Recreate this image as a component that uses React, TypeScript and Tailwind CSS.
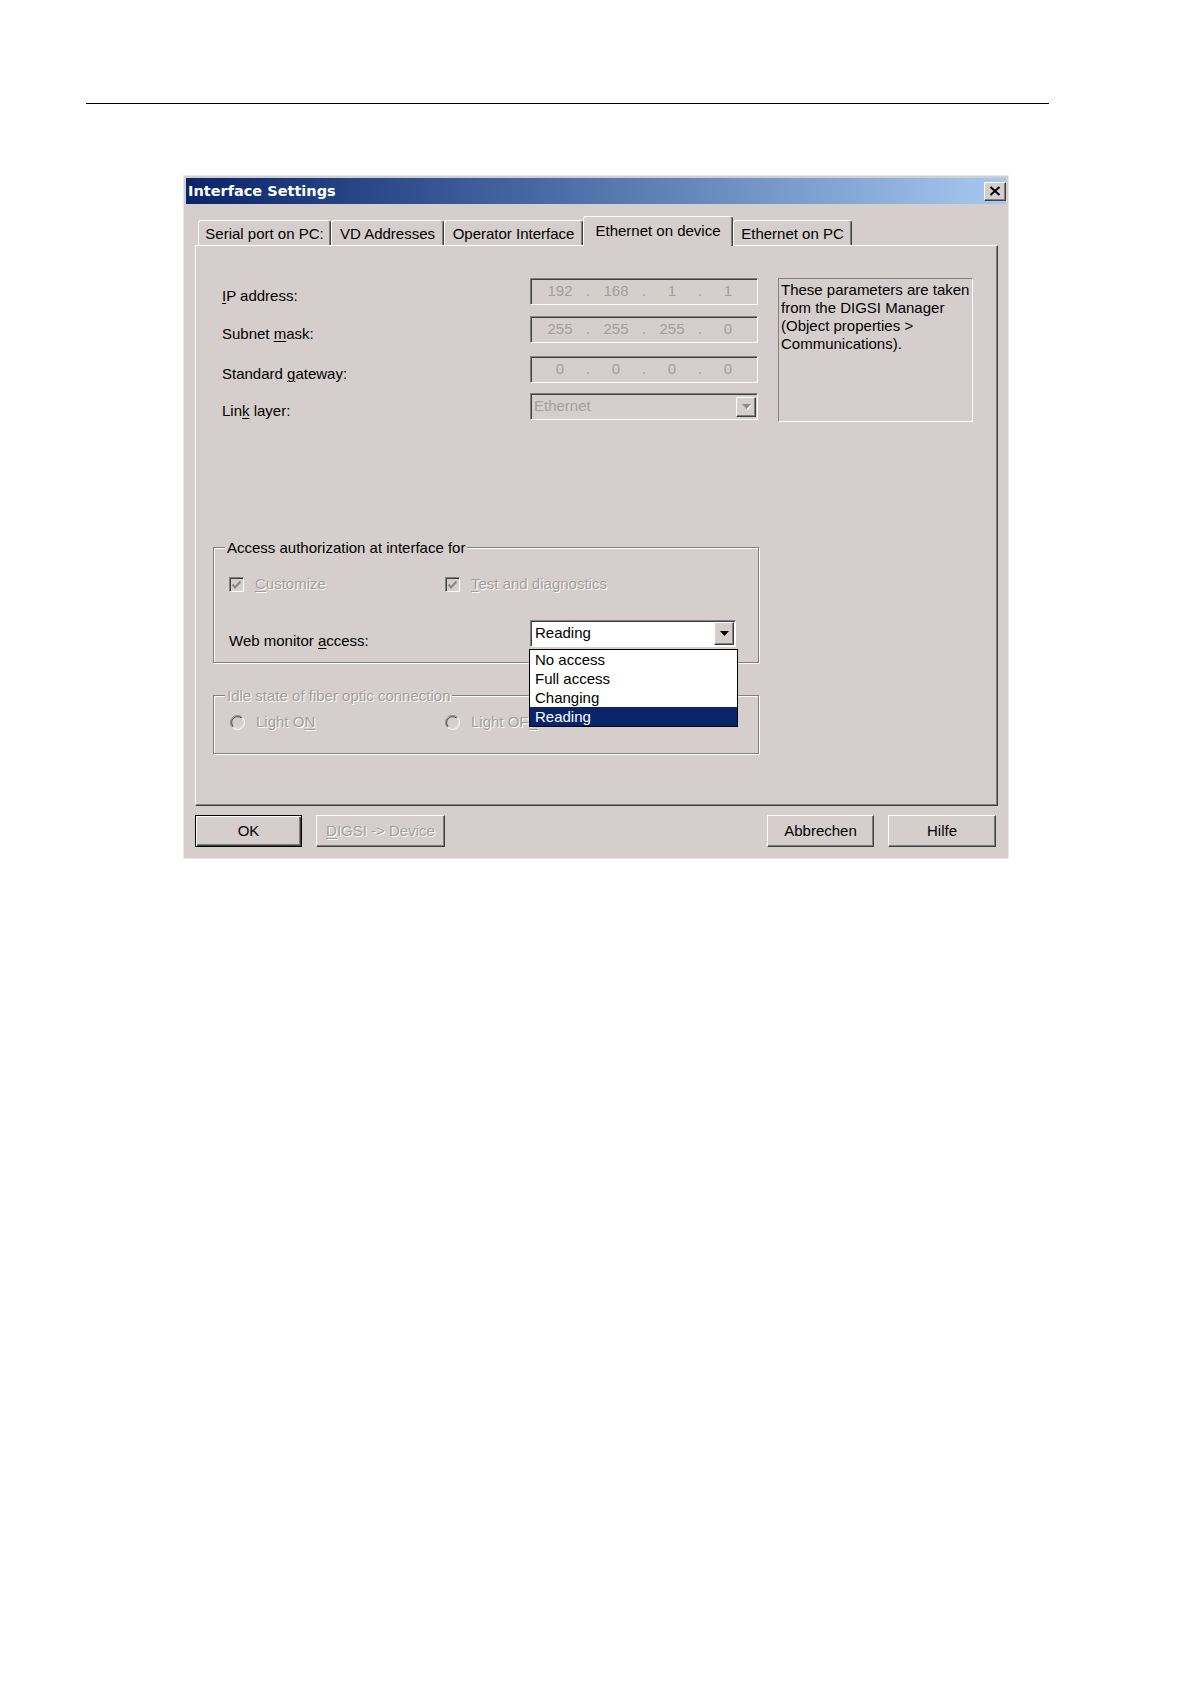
import React from 'react';

// Win2000-style bevels
const raised =
  'border border-t-white border-l-white border-r-[#404040] border-b-[#404040] shadow-[inset_-1px_-1px_0_#808080]';
const sunken =
  'border border-t-[#808080] border-l-[#808080] border-r-white border-b-white shadow-[inset_1px_1px_0_#404040]';
const grayText = 'text-[#a39e9c] [text-shadow:1px_1px_0_#ffffff]';

function Key({ children }: { children: React.ReactNode }) {
  return <span className="underline underline-offset-[2px] decoration-1">{children}</span>;
}

function Arrow({ disabled }: { disabled?: boolean }) {
  return (
    <svg width="9" height="5" viewBox="0 0 9 5" className={disabled ? 'drop-shadow-[1px_1px_0_#ffffff]' : ''}>
      <polygon points="0,0 9,0 4.5,5" fill={disabled ? '#8e8a88' : '#000000'} />
    </svg>
  );
}

function Check() {
  return (
    <div className={`w-[15px] h-[15px] flex items-center justify-center bg-[#d6cecd] ${sunken}`}>
      <svg width="11" height="10" viewBox="0 0 11 10">
        <polyline points="1.5,4.5 4,7.5 9.5,1.5" fill="none" stroke="#8a8584" strokeWidth="2" />
      </svg>
    </div>
  );
}

function Radio() {
  return (
    <svg width="15" height="15" viewBox="0 0 15 15">
      <circle cx="7.5" cy="7.5" r="6.5" fill="#d6cecd" />
      <path d="M2.55 12.45 A7 7 0 0 1 12.45 2.55" fill="none" stroke="#808080" strokeWidth="1" />
      <path d="M12.45 2.55 A7 7 0 0 1 2.55 12.45" fill="none" stroke="#ffffff" strokeWidth="1" />
      <path d="M3.26 11.74 A6 6 0 0 1 11.74 3.26" fill="none" stroke="#404040" strokeWidth="1" />
      <path d="M11.74 3.26 A6 6 0 0 1 3.26 11.74" fill="none" stroke="#e6e0de" strokeWidth="1" />
    </svg>
  );
}

function IpField({ parts }: { parts: string[] }) {
  return (
    <div className={`w-[228px] h-[27px] flex items-center pl-[1px] bg-[#d6cecd] text-[#a39e9c] ${sunken}`}>
      {parts.map((p, i) => (
        <React.Fragment key={i}>
          {i > 0 && <span className="w-0 flex justify-center">.</span>}
          <span className="w-[56px] text-center">{p}</span>
        </React.Fragment>
      ))}
    </div>
  );
}

function Row({ label, className, children }: { label: React.ReactNode; className?: string; children: React.ReactNode }) {
  return (
    <div className={`flex h-[27px] ${className ?? ''}`}>
      <div className="w-[334px] pl-[26px] pt-[9px] leading-[17px]">{label}</div>
      {children}
    </div>
  );
}

function Tab({ label, active, w }: { label: string; active?: boolean; w: string }) {
  return (
    <div
      className={`${w} ${
        active ? 'h-[30px] mb-[-1px] pb-[3px] relative z-10 bg-[#d6cecd]' : 'h-[25px]'
      } flex items-center justify-center border-t border-l border-r border-t-white border-l-white border-r-[#404040] shadow-[inset_-1px_0_0_#808080] rounded-t-[3px] leading-[17px]`}
    >
      {label}
    </div>
  );
}

function Button({ children, w, def, className }: { children: React.ReactNode; w: string; def?: boolean; className?: string }) {
  return (
    <div
      className={`${w} h-[32px] flex items-center justify-center bg-[#d6cecd] ${
        def
          ? 'border border-black shadow-[inset_1px_1px_0_#ffffff,inset_-1px_-1px_0_#404040,inset_-2px_-2px_0_#808080]'
          : raised
      } ${className ?? ''}`}
    >
      {children}
    </div>
  );
}

export default function App() {
  return (
    <div className="min-h-[1684px] w-[1190px] bg-white pt-[103px] font-['Liberation_Sans',Arial,sans-serif] text-[15px] text-black">
      <div className="ml-[86px] h-px w-[963px] bg-black" />

      {/* Dialog */}
      <div className="mt-[71px] ml-[183px] w-[826px] h-[684px] bg-[#d6cecd] border border-[#ebe7e6] p-[2px] flex flex-col">
        {/* Title bar */}
        <div className="h-[26px] shrink-0 flex items-center justify-between bg-linear-to-r from-[#0a246a] to-[#a6caf0] pl-[2px]">
          <span className="font-['DejaVu_Sans',sans-serif] font-bold text-[14.5px] text-white leading-none">Interface Settings</span>
          <div className={`w-[22px] h-[19px] flex items-center justify-center bg-[#d6cecd] ${raised}`}>
            <svg width="12" height="10" viewBox="0 0 12 10">
              <path d="M1.5 1 L10.5 9 M10.5 1 L1.5 9" stroke="#000" strokeWidth="2" />
            </svg>
          </div>
        </div>

        {/* Tabs */}
        <div className="mt-[12px] h-[29px] flex items-end pl-[12px]">
          <Tab w="w-[133px]" label="Serial port on PC:" />
          <Tab w="w-[113px]" label="VD Addresses" />
          <Tab w="w-[139px]" label="Operator Interface" />
          <Tab w="w-[150px]" label="Ethernet on device" active />
          <Tab w="w-[119px]" label="Ethernet on PC" />
        </div>

        {/* Panel */}
        <div className={`ml-[9px] w-[803px] h-[561px] shrink-0 ${raised}`}>
          <div className="flex pt-[32px]">
            <div className="w-[562px]">
              <Row label={<><Key>I</Key>P address:</>}>
                <IpField parts={['192', '168', '1', '1']} />
              </Row>
              <Row className="mt-[11px]" label={<>Subnet <Key>m</Key>ask:</>}>
                <IpField parts={['255', '255', '255', '0']} />
              </Row>
              <Row className="mt-[13px]" label={<>Standard <Key>g</Key>ateway:</>}>
                <IpField parts={['0', '0', '0', '0']} />
              </Row>
              <Row className="mt-[10px]" label={<>Lin<Key>k</Key> layer:</>}>
                <div className={`w-[228px] h-[27px] flex items-center justify-between bg-[#d6cecd] ${sunken}`}>
                  <span className="pl-[3px] text-[#a39e9c]">Ethernet</span>
                  <div className={`w-[20px] h-[20px] mr-[1px] flex items-center justify-center ${raised}`}>
                    <Arrow disabled />
                  </div>
                </div>
              </Row>
            </div>
            <div className="ml-[20px] w-[195px] h-[144px] border border-t-[#808080] border-l-[#808080] border-r-white border-b-white pl-[2px] pt-[2px] leading-[18px]">
              These parameters are taken
              <br />
              from the DIGSI Manager
              <br />
              (Object properties &gt;
              <br />
              Communications).
            </div>
          </div>

          {/* Access authorization */}
          <fieldset className="mt-[117px] ml-[17px] w-[546px] h-[124px] border border-[#808080] shadow-[inset_1px_1px_0_#ffffff,1px_1px_0_#ffffff]">
            <legend className="ml-[11px] px-[2px] leading-[17px] bg-[#d6cecd]">Access authorization at interface for</legend>
            <div className="pt-[20px] pl-[15px] flex h-[37px] items-center">
              <div className="w-[216px] flex items-center gap-[11px]">
                <Check />
                <span className={grayText}>
                  <Key>C</Key>ustomize
                </span>
              </div>
              <div className="flex items-center gap-[11px]">
                <Check />
                <span className={grayText}>
                  <Key>T</Key>est and diagnostics
                </span>
              </div>
            </div>
            <div className="mt-[27px] flex">
              <div className="w-[316px] pl-[15px] pt-[12px] leading-[17px]">
                Web monitor <Key>a</Key>ccess:
              </div>
              <div className={`relative w-[206px] h-[27px] flex items-center justify-between bg-white ${sunken}`}>
                <span className="pl-[4px]">Reading</span>
                <div className={`w-[20px] self-stretch my-[1px] mr-[1px] flex items-center justify-center bg-[#d6cecd] ${raised}`}>
                  <Arrow />
                </div>
                {/* Open dropdown list */}
                <div className="absolute left-[-2px] top-[28px] w-[209px] border border-black bg-white z-20 leading-[19px]">
                  <div className="pl-[5px] h-[19px]">No access</div>
                  <div className="pl-[5px] h-[19px]">Full access</div>
                  <div className="pl-[5px] h-[19px]">Changing</div>
                  <div className="pl-[5px] h-[19px] bg-[#0a246a] text-white">Reading</div>
                </div>
              </div>
            </div>
          </fieldset>

          {/* Fiber optic idle state */}
          <fieldset className="mt-[24px] ml-[17px] w-[546px] h-[67px] border border-[#808080] shadow-[inset_1px_1px_0_#ffffff,1px_1px_0_#ffffff]">
            <legend className={`ml-[11px] px-[2px] leading-[17px] bg-[#d6cecd] ${grayText}`}>Idle state of fiber optic connection</legend>
            <div className="pt-[10px] pl-[16px] flex h-[27px] items-center">
              <div className="w-[215px] flex items-center gap-[11px]">
                <Radio />
                <span className={grayText}>
                  Light O<Key>N</Key>
                </span>
              </div>
              <div className="flex items-center gap-[11px]">
                <Radio />
                <span className={grayText}>
                  Light OF<Key>F</Key>
                </span>
              </div>
            </div>
          </fieldset>
        </div>

        {/* Buttons */}
        <div className="mt-[9px] flex pl-[9px] pr-[10px]">
          <Button w="w-[107px]" def>
            OK
          </Button>
          <Button w="w-[129px]" className="ml-[14px]">
            <span className={grayText}>
              <Key>D</Key>IGSI -&gt; Device
            </span>
          </Button>
          <div className="flex-1" />
          <Button w="w-[107px]">Abbrechen</Button>
          <Button w="w-[108px]" className="ml-[14px]">
            Hilfe
          </Button>
        </div>
      </div>
    </div>
  );
}
